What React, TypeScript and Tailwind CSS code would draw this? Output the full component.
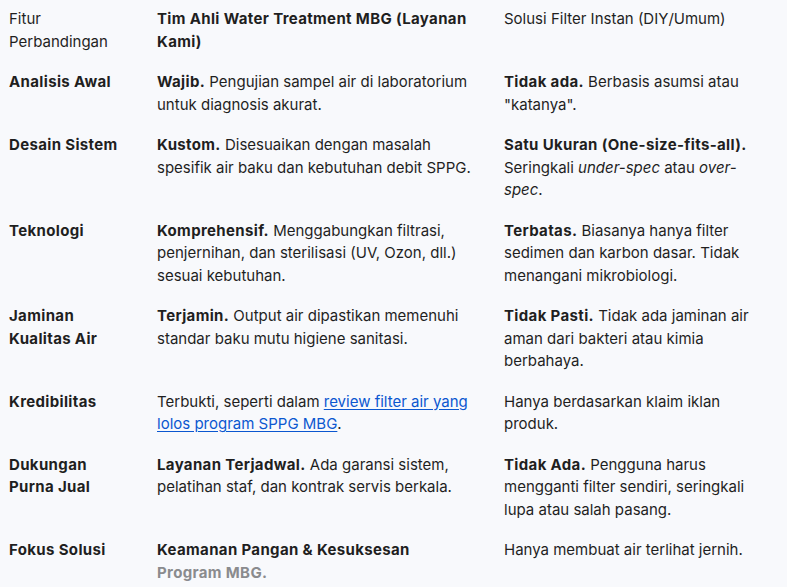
import React from 'react';

type Row = {
  label: React.ReactNode;
  ours: React.ReactNode;
  diy: React.ReactNode;
};

const B = ({ children }: { children: React.ReactNode }) => (
  <b className="font-bold tracking-[0.35px]">{children}</b>
);

const rows: Row[] = [
  {
    label: 'Analisis Awal',
    ours: (
      <>
        <B>Wajib.</B> Pengujian sampel air di laboratorium untuk diagnosis akurat.
      </>
    ),
    diy: (
      <>
        <B>Tidak ada.</B> Berbasis asumsi atau "katanya".
      </>
    ),
  },
  {
    label: 'Desain Sistem',
    ours: (
      <>
        <B>Kustom.</B> Disesuaikan dengan masalah spesifik air baku dan kebutuhan debit SPPG.
      </>
    ),
    diy: (
      <>
        <B>Satu Ukuran (One-size-fits-all).</B> Seringkali <i>under-spec</i> atau <i>over-spec</i>.
      </>
    ),
  },
  {
    label: 'Teknologi',
    ours: (
      <>
        <B>Komprehensif.</B> Menggabungkan filtrasi, penjernihan, dan sterilisasi (UV, Ozon, dll.) sesuai kebutuhan.
      </>
    ),
    diy: (
      <>
        <B>Terbatas.</B> Biasanya hanya filter sedimen dan karbon dasar. Tidak menangani mikrobiologi.
      </>
    ),
  },
  {
    label: 'Jaminan Kualitas Air',
    ours: (
      <>
        <B>Terjamin.</B> Output air dipastikan memenuhi standar baku mutu higiene sanitasi.
      </>
    ),
    diy: (
      <>
        <B>Tidak Pasti.</B> Tidak ada jaminan air aman dari bakteri atau kimia berbahaya.
      </>
    ),
  },
  {
    label: 'Kredibilitas',
    ours: (
      <>
        Terbukti, seperti dalam{' '}
        <a href="#" className="text-[#0b57d0] underline underline-offset-2">
          review filter air yang lolos program SPPG MBG
        </a>
        .
      </>
    ),
    diy: <>Hanya berdasarkan klaim iklan produk.</>,
  },
  {
    label: 'Dukungan Purna Jual',
    ours: (
      <>
        <B>Layanan Terjadwal.</B> Ada garansi sistem, pelatihan staf, dan kontrak servis berkala.
      </>
    ),
    diy: (
      <>
        <B>Tidak Ada.</B> Pengguna harus mengganti filter sendiri, seringkali lupa atau salah pasang.
      </>
    ),
  },
];

export default function App() {
  return (
    <div className="min-h-screen bg-[#f8f9fc] text-[#1f1f1f] text-[15px] leading-[22.5px] font-['Inter',sans-serif] overflow-hidden">
      <table className="border-collapse table-fixed w-[787px]">
        <colgroup>
          <col className="w-[148px]" />
          <col className="w-[347px]" />
          <col />
        </colgroup>
        <thead>
          <tr className="align-top text-left">
            <th className="font-normal pl-[9px] pr-[24px] pt-[8px] pb-[9px]">Fitur Perbandingan</th>
            <th className="font-bold tracking-[0.35px] pl-[9px] pr-[22px] pt-[8px] pb-[9px]">
              Tim Ahli Water Treatment MBG (Layanan Kami)
            </th>
            <th className="font-normal pl-[9px] pr-[18px] pt-[8px] pb-[9px]">Solusi Filter Instan (DIY/Umum)</th>
          </tr>
        </thead>
        <tbody>
          {rows.map((r, i) => (
            <tr key={i} className="align-top">
              <td className="font-bold tracking-[0.35px] pl-[9px] pr-[24px] py-[9px]">{r.label}</td>
              <td className="pl-[9px] pr-[22px] py-[9px]">{r.ours}</td>
              <td className="pl-[9px] pr-[18px] py-[9px]">{r.diy}</td>
            </tr>
          ))}
          <tr className="align-top">
            <td className="font-bold tracking-[0.35px] pl-[9px] pr-[24px] py-[9px]">Fokus Solusi</td>
            <td className="font-bold tracking-[0.35px] pl-[9px] pr-[22px] py-[9px]">
              Keamanan Pangan &amp; Kesuksesan <span className="text-[#8a8b8e]">Program MBG.</span>
            </td>
            <td className="pl-[9px] pr-[18px] py-[9px]">Hanya membuat air terlihat jernih.</td>
          </tr>
        </tbody>
      </table>
    </div>
  );
}
